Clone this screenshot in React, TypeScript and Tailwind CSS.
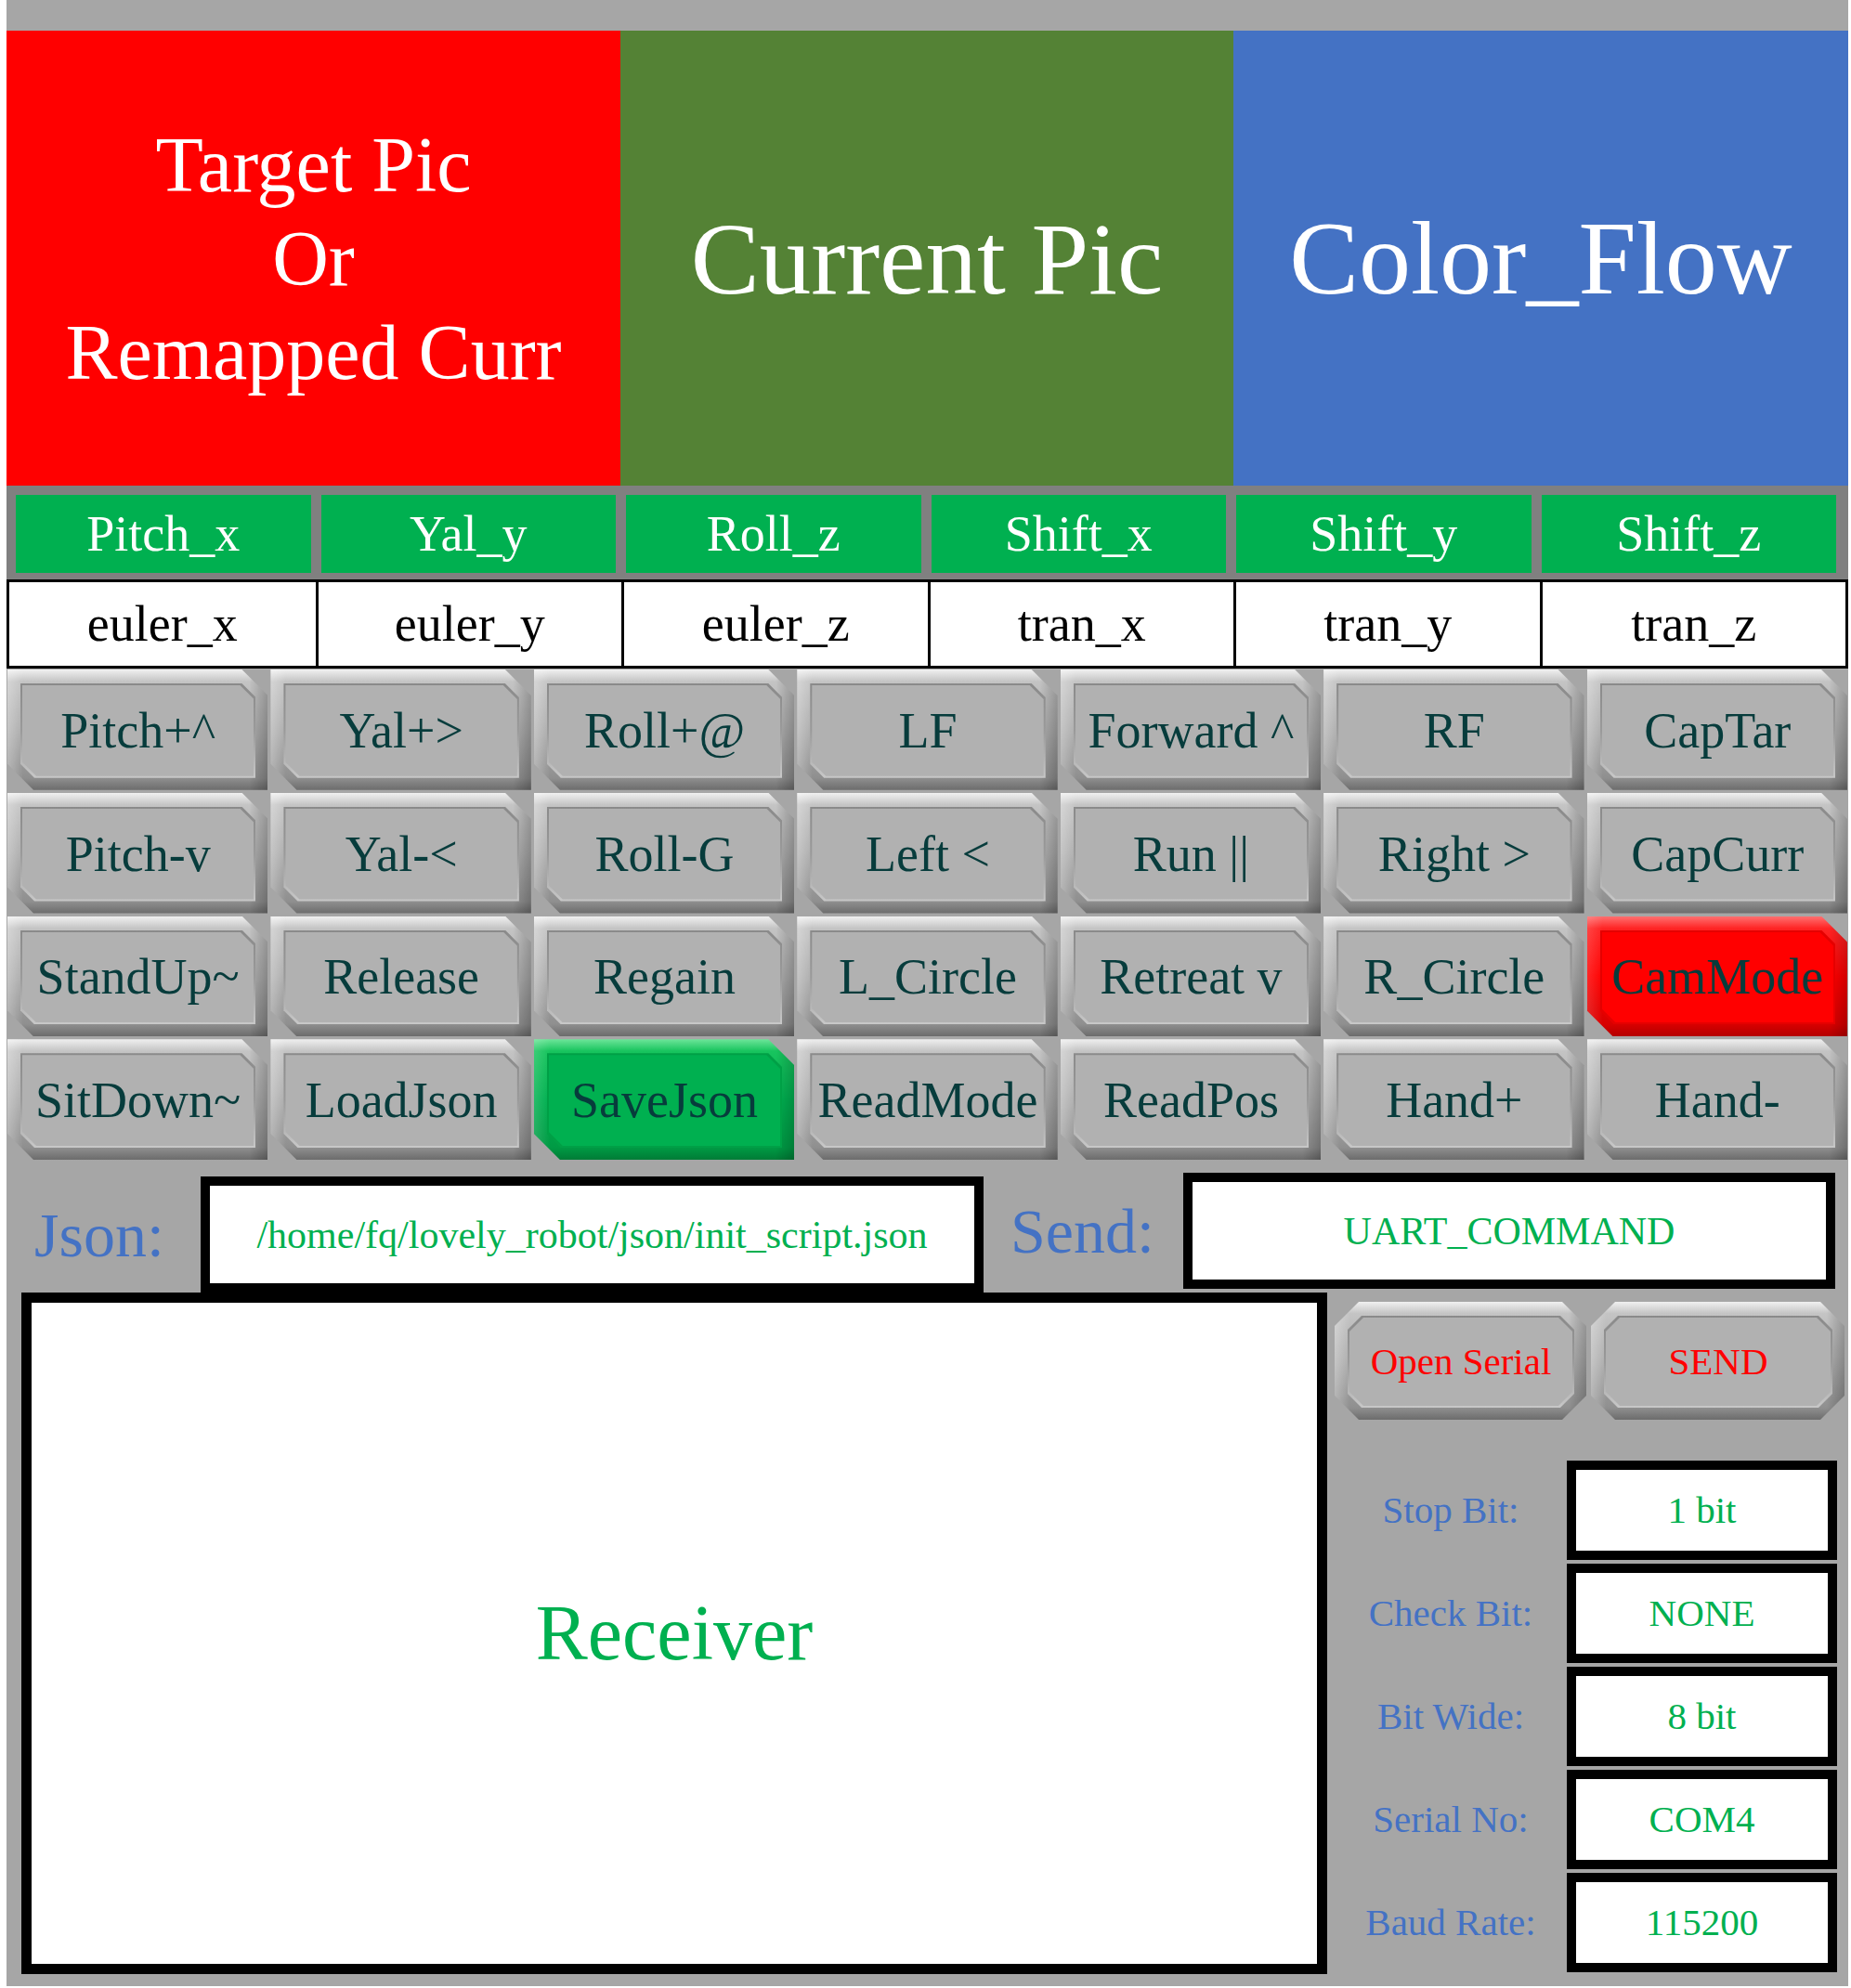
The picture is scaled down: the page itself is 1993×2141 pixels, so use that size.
import React from "react";

type Tone = "gray" | "red" | "green";
type Shape = "tab" | "oct";

const TONES: Record<Tone, { outer: string; ring: string; face: string }> = {
  gray: {
    outer:
      "bg-[linear-gradient(to_right,rgba(255,255,255,0.3),transparent_6%,transparent_93%,rgba(0,0,0,0.22)),linear-gradient(to_bottom,#f0f0f0,#c4c4c4_10%,#adadad_50%,#8f8f8f_90%,#6c6c6c)]",
    ring: "bg-[linear-gradient(to_bottom,#8a8a8a,#9a9a9a_50%,#c8c8c8)]",
    face: "bg-[#b1b1b1]",
  },
  red: {
    outer:
      "bg-[linear-gradient(to_right,rgba(255,255,255,0.15),transparent_6%,transparent_93%,rgba(0,0,0,0.18)),linear-gradient(to_bottom,#ff7070,#ff2424_10%,#ff0000_50%,#d80000_90%,#b40000)]",
    ring: "bg-[#e50000]",
    face: "bg-[#ff0000]",
  },
  green: {
    outer:
      "bg-[linear-gradient(to_right,rgba(255,255,255,0.15),transparent_6%,transparent_93%,rgba(0,0,0,0.18)),linear-gradient(to_bottom,#6ee69a,#18c45e_10%,#00b050_50%,#009a44_90%,#007c36)]",
    ring: "bg-[#00a046]",
    face: "bg-[#00b050]",
  },
};

function BevelButton({
  label,
  tone = "gray",
  shape = "tab",
  textClass = "text-[54px] text-[#073c3c]",
}: {
  label: string;
  tone?: Tone;
  shape?: Shape;
  textClass?: string;
}) {
  const t = TONES[tone];
  const outerClip =
    shape === "tab"
      ? "[clip-path:polygon(0_0,calc(100%_-_28px)_0,100%_28px,100%_100%,28px_100%,0_calc(100%_-_28px))]"
      : "[clip-path:polygon(26px_0,calc(100%_-_26px)_0,100%_26px,100%_calc(100%_-_26px),calc(100%_-_26px)_100%,26px_100%,0_calc(100%_-_26px),0_26px)]";
  const innerClip =
    shape === "tab"
      ? "[clip-path:polygon(0_0,calc(100%_-_15px)_0,100%_15px,100%_100%,15px_100%,0_calc(100%_-_15px))]"
      : "[clip-path:polygon(15px_0,calc(100%_-_15px)_0,100%_15px,100%_calc(100%_-_15px),calc(100%_-_15px)_100%,15px_100%,0_calc(100%_-_15px),0_15px)]";

  return (
    <div className={`h-full w-full pt-[15px] pb-[13px] pl-[14px] pr-[13px] ${t.outer} ${outerClip}`}>
      <div className={`h-full w-full p-[2px] ${t.ring} ${innerClip}`}>
        <div
          className={`h-full w-full flex items-center justify-center whitespace-nowrap leading-none ${t.face} ${innerClip} ${textClass}`}>
          {label}
        </div>
      </div>
    </div>
  );
}

const axes = ["Pitch_x", "Yal_y", "Roll_z", "Shift_x", "Shift_y", "Shift_z"];
const values = ["euler_x", "euler_y", "euler_z", "tran_x", "tran_y", "tran_z"];

const buttons: { label: string; tone?: Tone }[] = [
  { label: "Pitch+^" },
  { label: "Yal+>" },
  { label: "Roll+@" },
  { label: "LF" },
  { label: "Forward ^" },
  { label: "RF" },
  { label: "CapTar" },
  { label: "Pitch-v" },
  { label: "Yal-<" },
  { label: "Roll-G" },
  { label: "Left <" },
  { label: "Run ||" },
  { label: "Right >" },
  { label: "CapCurr" },
  { label: "StandUp~" },
  { label: "Release" },
  { label: "Regain" },
  { label: "L_Circle" },
  { label: "Retreat v" },
  { label: "R_Circle" },
  { label: "CamMode", tone: "red" },
  { label: "SitDown~" },
  { label: "LoadJson" },
  { label: "SaveJson", tone: "green" },
  { label: "ReadMode" },
  { label: "ReadPos" },
  { label: "Hand+" },
  { label: "Hand-" },
];

const settings = [
  { label: "Stop Bit:", value: "1 bit" },
  { label: "Check Bit:", value: "NONE" },
  { label: "Bit Wide:", value: "8 bit" },
  { label: "Serial No:", value: "COM4" },
  { label: "Baud Rate:", value: "115200" },
];

export default function App() {
  return (
    <div className="w-[1993px] h-[2141px] bg-white font-['Liberation_Serif','Times_New_Roman',serif]">
      <div className="ml-[7px] w-[1983px] h-[2139px] bg-[#a6a6a6] flex flex-col">
        <div className="h-[33px] shrink-0" />

        {/* picture panels */}
        <div className="grid grid-cols-[661px_660px_662px] h-[490px] shrink-0 text-white">
          <div className="bg-[#ff0000] flex flex-col items-center justify-center text-[84px] leading-[101px]">
            <span>Target Pic</span>
            <span>Or</span>
            <span>Remapped Curr</span>
          </div>
          <div className="bg-[#548235] flex items-center justify-center text-[111px] leading-none">
            Current Pic
          </div>
          <div className="bg-[#4472c4] flex items-center justify-center text-[112px] leading-none">
            Color_Flow
          </div>
        </div>

        {/* axis labels */}
        <div className="bg-[#808080] grid grid-cols-6 gap-x-[11px] pl-[10px] pr-[13px] pt-[10px] pb-[7px] shrink-0">
          {axes.map((a) => (
            <div
              key={a}
              className="h-[84px] bg-[#00b050] text-white text-[54px] leading-none flex items-center justify-center">
              {a}
            </div>
          ))}
        </div>

        {/* values */}
        <div className="grid grid-cols-6 h-[96px] border-[3px] border-black bg-white shrink-0">
          {values.map((v, i) => (
            <div
              key={v}
              className={`flex items-center justify-center text-[54px] leading-none text-black ${
                i > 0 ? "border-l-[3px] border-black" : ""
              }`}>
              {v}
            </div>
          ))}
        </div>

        {/* control buttons */}
        <div className="grid grid-cols-7 grid-rows-4 gap-[3px] h-[529px] px-[1px] pt-[1px] shrink-0">
          {buttons.map((b) => (
            <BevelButton key={b.label} label={b.label} tone={b.tone} />
          ))}
        </div>

        {/* json / send */}
        <div className="flex items-start h-[143px] shrink-0">
          <div className="mt-[18px] w-[209px] h-[125px] pl-[30px] flex items-center text-[68px] leading-none text-[#4472c4]">
            Json:
          </div>
          <div className="mt-[18px] w-[843px] h-[125px] border-[10px] border-black bg-white flex items-center justify-center text-[42px] leading-none text-[#00b050] whitespace-nowrap">
            /home/fq/lovely_robot/json/init_script.json
          </div>
          <div className="mt-[14px] w-[215px] h-[125px] pl-[29px] flex items-center text-[68px] leading-none text-[#4472c4]">
            Send:
          </div>
          <div className="mt-[14px] w-[702px] h-[125px] border-[10px] border-black bg-white flex items-center justify-center text-[42px] leading-none text-[#00b050]">
            UART_COMMAND
          </div>
        </div>

        {/* receiver + serial settings */}
        <div className="flex items-start flex-1">
          <div className="ml-[16px] w-[1406px] h-[734px] border-[11px] border-black bg-white flex items-center justify-center text-[84px] leading-none text-[#00b050]">
            Receiver
          </div>
          <div className="ml-[8px] w-[549px] flex flex-col">
            <div className="mt-[10px] h-[127px] flex gap-[5px]">
              <div className="w-[271px] h-full">
                <BevelButton label="Open Serial" shape="oct" textClass="text-[41px] text-[#ff0000]" />
              </div>
              <div className="w-[273px] h-full">
                <BevelButton label="SEND" shape="oct" textClass="text-[41px] text-[#ff0000]" />
              </div>
            </div>
            <div className="mt-[44px] flex flex-col gap-[4px]">
              {settings.map((s) => (
                <div key={s.label} className="flex items-center h-[107px]">
                  <div className="w-[250px] text-center text-[41px] leading-none text-[#4472c4] whitespace-nowrap">
                    {s.label}
                  </div>
                  <div className="w-[291px] h-[107px] border-[10px] border-black bg-white flex items-center justify-center text-[41px] leading-none text-[#00b050]">
                    {s.value}
                  </div>
                </div>
              ))}
            </div>
          </div>
        </div>
      </div>
    </div>
  );
}
